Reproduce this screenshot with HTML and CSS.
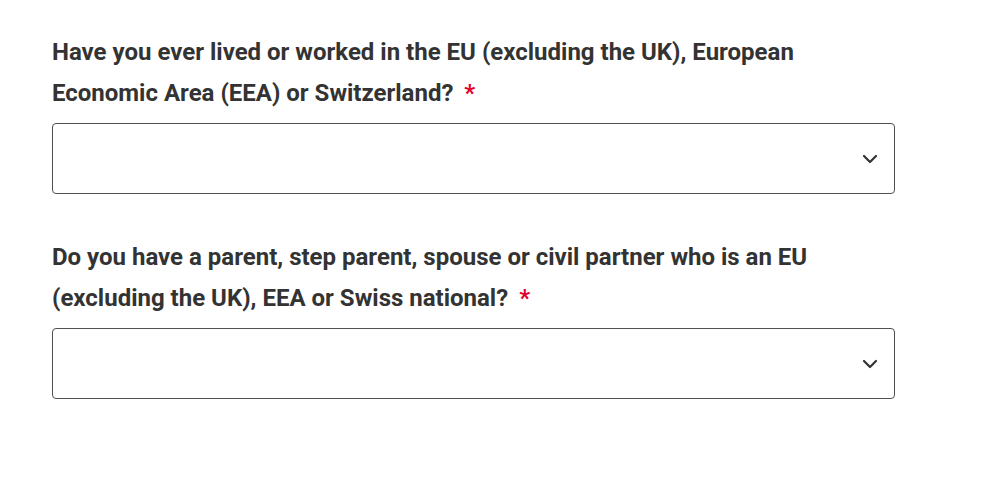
FILE: index.html
```html
<!DOCTYPE html>
<html lang="en">
<head>
<meta charset="utf-8">
<link rel="stylesheet" href="styles.css">
<title>Form</title>
</head>
<body>
<form class="form">
  <div class="field">
    <label class="label" for="q1">Have you ever lived or worked in the EU (excluding the UK), European Economic Area (EEA) or Switzerland?<span class="req">*</span></label>
    <div class="select">
      <select id="q1"><option></option></select>
      <svg class="chev" width="16" height="10" viewBox="0 0 16 10"><path d="M2 2 L8 8 L14 2" fill="none" stroke="#333" stroke-width="2.2" stroke-linecap="round" stroke-linejoin="round"/></svg>
    </div>
  </div>
  <div class="field">
    <label class="label" for="q2">Do you have a parent, step parent, spouse or civil partner who is an EU (excluding the UK), EEA or Swiss national?<span class="req">*</span></label>
    <div class="select">
      <select id="q2"><option></option></select>
      <svg class="chev" width="16" height="10" viewBox="0 0 16 10"><path d="M2 2 L8 8 L14 2" fill="none" stroke="#333" stroke-width="2.2" stroke-linecap="round" stroke-linejoin="round"/></svg>
    </div>
  </div>
</form>
</body>
</html>
```
FILE: styles.css
```css
html, body {
  margin: 0;
  padding: 0;
  background: #fff;
}
.form {
  display: flex;
  flex-direction: column;
  gap: 43px;
  padding: 32px 0 0 52px;
  width: 843px;
  font-family: Roboto, "Liberation Sans", sans-serif;
}
.field {
  display: flex;
  flex-direction: column;
  gap: 9px;
}
.label {
  display: block;
  font-size: 24px;
  font-weight: 700;
  line-height: 41px;
  color: #333;
}
.req {
  display: inline-block;
  color: #e4002b;
  margin-left: 11px;
}
.select {
  position: relative;
  height: 71px;
  box-sizing: border-box;
  border: 1px solid #505050;
  border-radius: 4px;
}
.select select {
  appearance: none;
  -webkit-appearance: none;
  width: 100%;
  height: 100%;
  border: 0;
  background: transparent;
  font: inherit;
  outline: none;
}
.chev {
  position: absolute;
  right: 16px;
  top: 30px;
  pointer-events: none;
}
```
